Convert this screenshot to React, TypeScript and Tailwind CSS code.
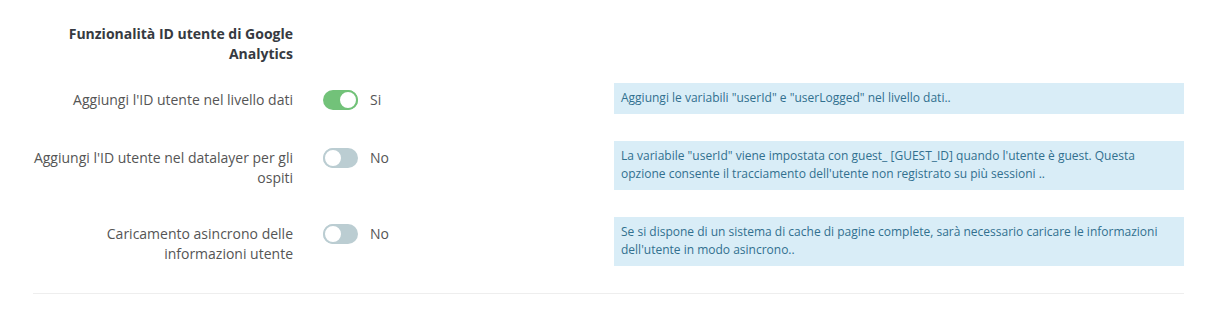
import React from "react";

function Toggle({ on }: { on: boolean }) {
  return (
    <div
      className={
        "relative h-[20px] w-[35px] rounded-full " +
        (on ? "bg-[#72c279]" : "bg-[#bbcdd2]")
      }
    >
      <div
        className={
          "absolute top-0 h-[20px] w-[20px] rounded-full border-2 bg-white " +
          (on ? "right-0 border-[#72c279]" : "left-0 border-[#bbcdd2]")
        }
      />
    </div>
  );
}

function Row({
  label,
  on,
  help,
}: {
  label: React.ReactNode;
  on: boolean;
  help: React.ReactNode;
}) {
  return (
    <div className="mb-[27px] flex items-start">
      <div className="w-[260px] pt-[7px] text-right text-[14px] leading-[20px] text-[#555]">
        {label}
      </div>
      <div className="ml-[30px] flex w-[291px] items-center pt-[7px]">
        <Toggle on={on} />
        <span className="ml-[12px] text-[14px] leading-[20px] text-[#555]">
          {on ? "Si" : "No"}
        </span>
      </div>
      <div className="w-[570px] bg-[#d9edf7] px-[7px] pt-[6px] pb-[7px] text-[12px] leading-[18px] text-[#31708f]">
        {help}
      </div>
    </div>
  );
}

export default function App() {
  return (
    <div
      className="min-h-[314px] w-[1213px] bg-white"
      style={{ fontFamily: '"Open Sans", "Noto Sans", sans-serif' }}
    >
      <div className="ml-[33px] w-[1151px] pt-[24px]">
        <div className="mb-[20px] w-[260px] text-right text-[14px] font-bold leading-[19.5px] text-[#363a41]">
          Funzionalità ID utente di Google Analytics
        </div>
        <Row
          label="Aggiungi l'ID utente nel livello dati"
          on={true}
          help={'Aggiungi le variabili "userId" e "userLogged" nel livello dati..'}
        />
        <Row
          label="Aggiungi l'ID utente nel datalayer per gli ospiti"
          on={false}
          help={
            'La variabile "userId" viene impostata con guest_ [GUEST_ID] quando l\'utente è guest. Questa opzione consente il tracciamento dell\'utente non registrato su più sessioni ..'
          }
        />
        <Row
          label="Caricamento asincrono delle informazioni utente"
          on={false}
          help={
            "Se si dispone di un sistema di cache di pagine complete, sarà necessario caricare le informazioni dell'utente in modo asincrono.."
          }
        />
        <div className="h-px w-full bg-[#eeeeee]" />
      </div>
    </div>
  );
}
